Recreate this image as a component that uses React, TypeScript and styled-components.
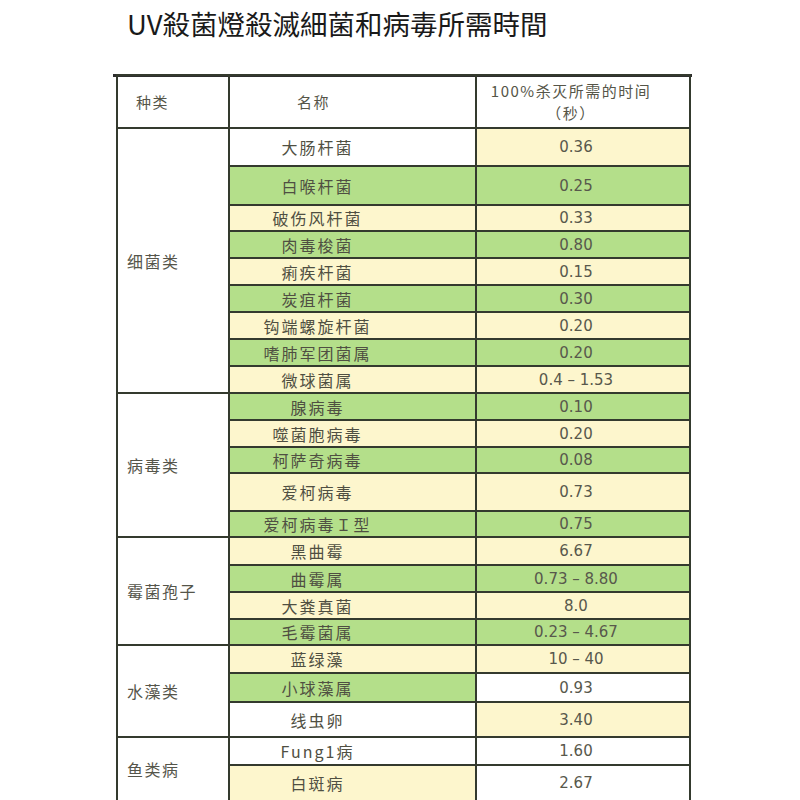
import styled, { createGlobalStyle } from "styled-components";

const GlobalStyle = createGlobalStyle`
  html, body {
    margin: 0;
    padding: 0;
    background: #ffffff;
  }
  body {
    font-family: "Noto Sans CJK SC", "Noto Sans", sans-serif;
  }
`;

const Page = styled.div`
  width: 800px;
  height: 800px;
  overflow: hidden;
  display: flex;
  flex-direction: column;
`;

const Title = styled.h1`
  margin: 4px 0 0 127px;
  font-family: "Noto Sans CJK TC", "Noto Sans", sans-serif;
  font-weight: 400;
  font-size: 27.5px;
  line-height: 38px;
  color: #1a1a1a;
`;

const TableWrap = styled.div`
  margin: 32px 0 0 113px;
  width: 579px;
  border-top: 3px solid #2e2e2e;
  padding: 0 3px;
  box-sizing: border-box;
`;

const Table = styled.table`
  border-collapse: collapse;
  table-layout: fixed;
  width: 573px;
  margin-top: -3px;
  color: #4f4f42;
`;

const Row = styled.tr<{ $h: number }>`
  height: ${(p) => p.$h}px;
`;

const fills: Record<string, string> = {
  g: "#b4df8a",
  y: "#fdf6cd",
  w: "#ffffff",
};

const Cell = styled.td`
  border: 2px solid #343a2e;
  padding: 0;
  vertical-align: middle;
  white-space: nowrap;
`;

const HeadCell = styled(Cell)<{ $align: "left" | "center"; $pad: string }>`
  text-align: ${(p) => p.$align};
  padding: ${(p) => p.$pad};
  font-size: 15px;
  line-height: 22px;
  letter-spacing: 1.5px;
  color: #555548;
`;

const CatCell = styled(Cell)`
  background: #ffffff;
  text-align: left;
  padding-left: 9px;
  font-size: 16px;
  letter-spacing: 1.5px;
  color: #55554a;
`;

const NameCell = styled(Cell)<{ $bg: string }>`
  background: ${(p) => fills[p.$bg]};
  text-align: center;
  padding-right: 70px;
  font-size: 16px;
  letter-spacing: 2px;
`;

const TimeCell = styled(Cell)<{ $bg: string }>`
  background: ${(p) => fills[p.$bg]};
  text-align: center;
  padding-right: 14px;
  font-family: "DejaVu Sans", "Noto Sans", sans-serif;
  font-size: 15px;
  color: #58584c;
`;

type Item = [string, string, string, string, number];

const groups: { name: string; rows: Item[] }[] = [
  {
    name: "细菌类",
    rows: [
      ["大肠杆菌", "0.36", "w", "y", 38],
      ["白喉杆菌", "0.25", "g", "g", 39],
      ["破伤风杆菌", "0.33", "y", "y", 26],
      ["肉毒梭菌", "0.80", "g", "g", 27],
      ["痢疾杆菌", "0.15", "y", "y", 27],
      ["炭疽杆菌", "0.30", "g", "g", 27],
      ["钩端螺旋杆菌", "0.20", "y", "y", 27],
      ["嗜肺军团菌属", "0.20", "g", "g", 27],
      ["微球菌属", "0.4 – 1.53", "y", "y", 27],
    ],
  },
  {
    name: "病毒类",
    rows: [
      ["腺病毒", "0.10", "g", "g", 27],
      ["噬菌胞病毒", "0.20", "y", "y", 27],
      ["柯萨奇病毒", "0.08", "g", "g", 26],
      ["爱柯病毒", "0.73", "y", "y", 38],
      ["爱柯病毒Ｉ型", "0.75", "g", "g", 26],
    ],
  },
  {
    name: "霉菌孢子",
    rows: [
      ["黑曲霉", "6.67", "y", "y", 28],
      ["曲霉属", "0.73 – 8.80", "g", "g", 27],
      ["大粪真菌", "8.0", "y", "y", 27],
      ["毛霉菌属", "0.23 – 4.67", "g", "g", 26],
    ],
  },
  {
    name: "水藻类",
    rows: [
      ["蓝绿藻", "10 – 40", "y", "y", 28],
      ["小球藻属", "0.93", "g", "w", 29],
      ["线虫卵", "3.40", "w", "y", 35],
    ],
  },
  {
    name: "鱼类病",
    rows: [
      ["Fung1病", "1.60", "w", "w", 28],
      ["白斑病", "2.67", "y", "w", 36],
    ],
  },
];

export default function App() {
  return (
    <Page>
      <GlobalStyle />
      <Title>UV殺菌燈殺滅細菌和病毒所需時間</Title>
      <TableWrap>
        <Table>
          <colgroup>
            <col style={{ width: 112 }} />
            <col style={{ width: 247 }} />
            <col style={{ width: 214 }} />
          </colgroup>
          <tbody>
            <Row $h={53}>
              <HeadCell $align="left" $pad="0 0 0 18px">种类</HeadCell>
              <HeadCell $align="center" $pad="0 78px 0 0">名称</HeadCell>
              <HeadCell $align="center" $pad="0 24px 0 0">
                100%杀灭所需的时间
                <br />
                （秒）
              </HeadCell>
            </Row>
            {groups.map((g) =>
              g.rows.map(([name, time, nb, tb, h], i) => (
                <Row key={g.name + name} $h={h}>
                  {i === 0 && <CatCell rowSpan={g.rows.length}>{g.name}</CatCell>}
                  <NameCell $bg={nb}>{name}</NameCell>
                  <TimeCell $bg={tb}>{time}</TimeCell>
                </Row>
              ))
            )}
          </tbody>
        </Table>
      </TableWrap>
    </Page>
  );
}
